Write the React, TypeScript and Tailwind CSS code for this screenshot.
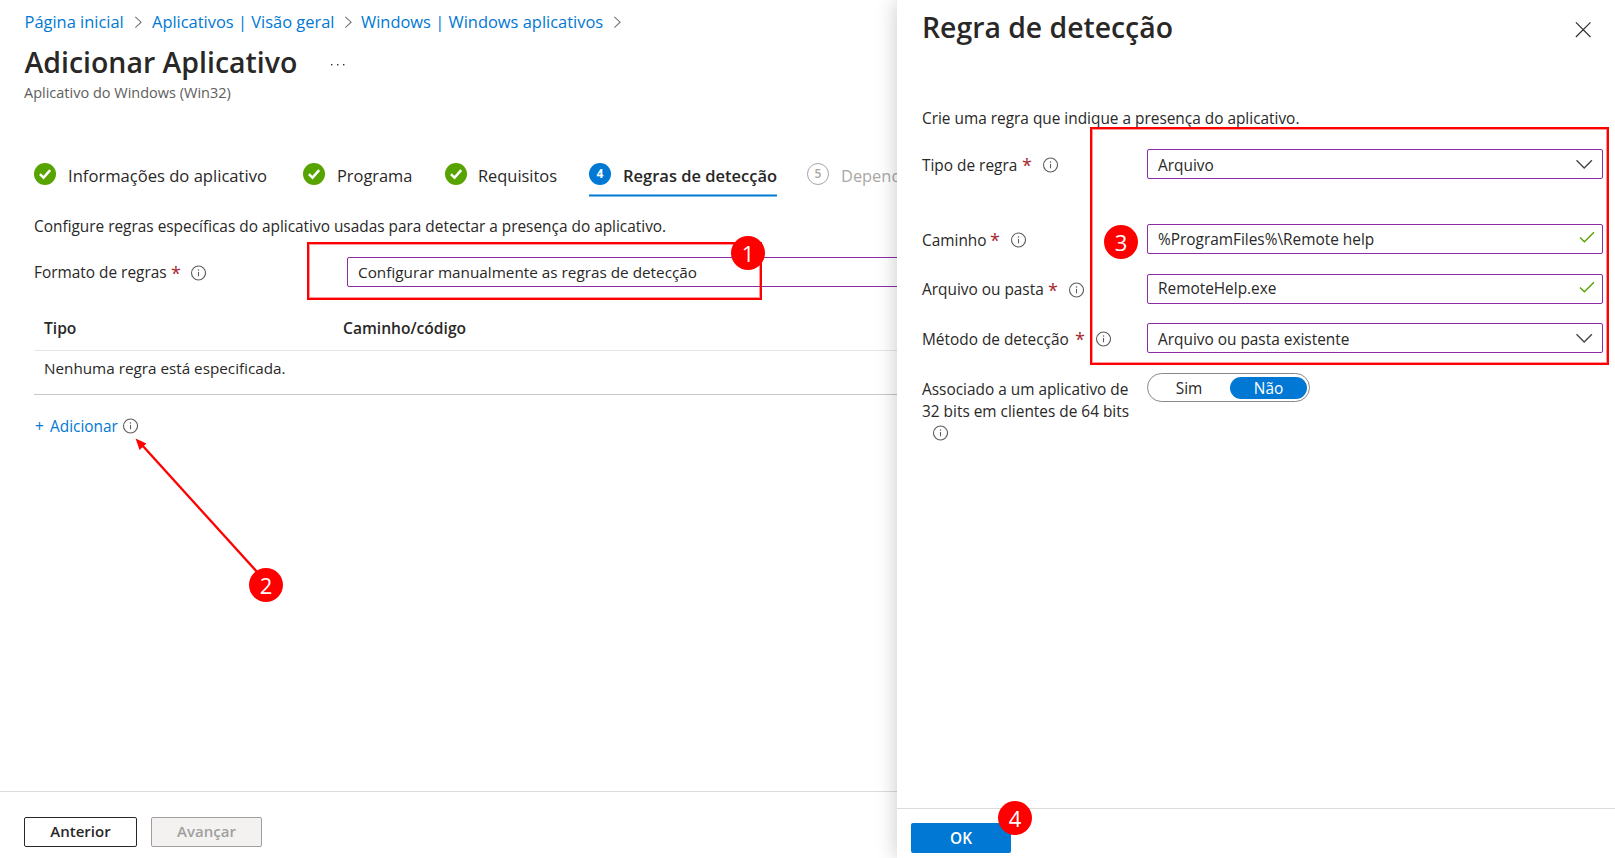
import React from 'react';

function InfoIcon({ className = '' }: { className?: string }) {
  return (
    <svg className={`size-4 shrink-0 ${className}`} viewBox="0 0 16 16" fill="none" aria-hidden="true">
      <circle cx="8.5" cy="8" r="7" stroke="#605e5c" strokeWidth="1.1" />
      <path d="M8.5 6.9v4.4" stroke="#605e5c" strokeWidth="1.1" />
      <circle cx="8.5" cy="4.9" r="0.75" fill="#605e5c" />
    </svg>
  );
}

function CrumbChevron({ className = '' }: { className?: string }) {
  return (
    <svg className={`h-3 w-2 shrink-0 ${className}`} viewBox="0 0 8 12" fill="none" aria-hidden="true">
      <path d="M0.3 0.8 6.1 6.2 0.3 11.6" stroke="#76746f" strokeWidth="1.1" />
    </svg>
  );
}

function ChevronDown() {
  return (
    <svg className="h-[10px] w-[17px] shrink-0" viewBox="0 0 17 10" fill="none" aria-hidden="true">
      <path d="M0.5 1.2 8.2 8.9 15.9 1.2" stroke="#484644" strokeWidth="1.4" />
    </svg>
  );
}

function ValidMark() {
  return (
    <svg className="h-3 w-4 shrink-0" viewBox="0 0 16 12" fill="none" aria-hidden="true">
      <path d="M1 6.4 5.4 10.8 15 1.2" stroke="#57a300" strokeWidth="1.4" />
    </svg>
  );
}

function DoneCircle() {
  return (
    <svg className="size-[22px] shrink-0" viewBox="0 0 22 22" fill="none" aria-hidden="true">
      <circle cx="11" cy="11" r="11" fill="#57a300" />
      <path d="M5.9 11.2 9.5 14.6 16.2 7.2" stroke="#fff" strokeWidth="2.5" />
    </svg>
  );
}

function Star() {
  return <span className="ml-[5px] w-2 shrink-0 text-[18px] leading-[22px] text-[#a4262c]">*</span>;
}

function Badge({ n, className }: { n: number; className: string }) {
  return (
    <span
      className={`absolute flex size-[34px] items-center justify-center rounded-full bg-[#ff0000] text-[22px] leading-none text-white ${className}`}
    >
      {n}
    </span>
  );
}

function Field({
  label,
  labelWidth,
  value,
  valid,
  labelShift = '',
  textShift = '',
  className = '',
}: {
  label: string;
  labelWidth: string;
  value: string;
  valid?: boolean;
  labelShift?: string;
  textShift?: string;
  className?: string;
}) {
  return (
    <div className={`flex h-[30px] ${className}`}>
      <div className="flex w-[225px] shrink-0 items-center pt-[2px]">
        <span className={`whitespace-nowrap ${labelWidth} ${labelShift}`}>{label}</span>
        <Star />
        <InfoIcon className="ml-3" />
      </div>
      <div className="flex w-[456px] items-center justify-between rounded-[2px] border border-[#8a2da5] bg-white pl-[10px]">
        <span className={textShift}>{value}</span>
        {valid ? (
          <span className="mr-[7px] pb-1">
            <ValidMark />
          </span>
        ) : (
          <span className="mr-[9px]">
            <ChevronDown />
          </span>
        )}
      </div>
    </div>
  );
}

export default function App() {
  return (
    <div className="relative flex h-[858px] w-[1615px] overflow-hidden bg-white font-['Open_Sans','Noto_Sans',sans-serif] text-[15.4px] leading-[22px] text-[#292827]">
      <main className="flex w-[897px] shrink-0 flex-col overflow-hidden whitespace-nowrap">
        <nav className="flex h-[43px] shrink-0 items-center pl-[24.5px] text-[16.45px] text-[#0078d4]">
          <a className="w-[110.5px]">Página inicial</a>
          <CrumbChevron />
          <a className="ml-[9px] w-[193px]">Aplicativos | Visão geral</a>
          <CrumbChevron />
          <a className="ml-2 w-[253px]">Windows | Windows aplicativos</a>
          <CrumbChevron />
        </nav>
        <div className="flex h-[38px] shrink-0 items-center pl-[24.5px]">
          <h1 className="w-[305.5px] text-[28.45px] font-semibold">Adicionar Aplicativo</h1>
          <svg className="mt-[5px] h-1 w-4" viewBox="0 0 16 4" fill="#323130" aria-hidden="true">
            <rect x="1" y="1" width="1.4" height="1.4" />
            <rect x="7" y="1" width="1.4" height="1.4" />
            <rect x="13" y="1" width="1.4" height="1.4" />
          </svg>
        </div>
        <p className="h-[23px] shrink-0 pt-px pl-[24px] text-[14.5px] text-[#605e5c]">Aplicativo do Windows (Win32)</p>

        <div className="mt-[53px] flex h-10 shrink-0 pl-[34px] text-[16.4px]">
          <div className="flex h-[34px] w-[269px] shrink-0 items-center gap-3">
            <DoneCircle />
            <span className="pt-[3px] text-[16.6px]">Informações do aplicativo</span>
          </div>
          <div className="flex h-[34px] w-[142px] shrink-0 items-center gap-3">
            <DoneCircle />
            <span className="pt-[3px]">Programa</span>
          </div>
          <div className="flex h-[34px] w-[144px] shrink-0 items-center gap-[11px]">
            <DoneCircle />
            <span className="pt-[3px]">Requisitos</span>
          </div>
          <div className="mr-[30px] flex w-[188px] shrink-0 flex-col justify-between">
            <div className="flex h-[34px] items-center gap-3 font-semibold">
              <span className="flex size-[22px] shrink-0 items-center justify-center rounded-full bg-[#0078d4] text-[12px] leading-none font-bold text-white">
                4
              </span>
              <span className="pt-[3px] text-[16.5px]">Regras de detecção</span>
            </div>
            <span className="h-[3px] border-y border-[#80bce9] bg-[#0078d4]" />
          </div>
          <div className="flex h-[34px] shrink-0 items-center gap-3 text-[#a9a7a5]">
            <span className="flex size-[22px] shrink-0 items-center justify-center rounded-full border border-[#a9a7a5] text-[12px] leading-none font-semibold">
              5
            </span>
            <span className="pt-[3px]">Dependências</span>
          </div>
        </div>

        <p className="mt-[18px] h-[22px] shrink-0 pt-px pl-[34px]">
          Configure regras específicas do aplicativo usadas para detectar a presença do aplicativo.
        </p>

        <div className="mt-5 flex h-[30px] shrink-0 pl-[34px]">
          <div className="flex w-[313px] shrink-0 items-center pt-px">
            <span className="w-[132px]">Formato de regras</span>
            <Star />
            <InfoIcon className="ml-[11px]" />
          </div>
          <div className="flex w-[600px] shrink-0 items-center rounded-[2px] border border-[#8a2da5] pl-[10px] text-[15.3px]">
            Configurar manualmente as regras de detecção
          </div>
        </div>

        <div className="ml-[34px] shrink-0">
          <div className="mt-[19px] flex h-[45px] items-center border-b border-[#e8e7e6] pl-[10px] text-[15.6px] font-semibold">
            <span className="w-[299px]">Tipo</span>
            <span>Caminho/código</span>
          </div>
          <div className="h-11 border-b border-[#c8c6c4] pt-[6px] pl-[10px] text-[15.25px]">
            Nenhuma regra está especificada.
          </div>
        </div>

        <div className="mt-5 flex h-[22px] shrink-0 items-center pl-[35px] text-[#0078d4]">
          <span className="w-[15px] pt-[2px]">+</span>
          <a className="w-[72px] pt-[2px]">Adicionar</a>
          <InfoIcon />
        </div>

        <footer className="mt-auto flex h-[67px] shrink-0 gap-[14px] border-t border-[#dcdbda] pt-[25px] pl-6 text-[15px] font-semibold">
          <button className="h-[30px] w-[113px] rounded-[2px] border border-[#292827] pb-[3px]">Anterior</button>
          <button className="h-[30px] w-[111px] rounded-[2px] border border-[#a19f9d] bg-[#f3f2f1] pb-[3px] text-[#a19f9d]">
            Avançar
          </button>
        </footer>
      </main>

      <aside className="flex w-[718px] shrink-0 flex-col bg-white shadow-[0_0_20px_rgba(0,0,0,0.22)]">
        <header className="flex h-[54px] shrink-0 items-center justify-between pl-[25px]">
          <h2 className="text-[28.35px] font-semibold">Regra de detecção</h2>
          <svg className="mt-[5px] mr-6 size-4" viewBox="0 0 16 16" fill="none" aria-hidden="true">
            <path d="M0.9 0.4 15.5 15M15.5 0.4 0.9 15" stroke="#323130" strokeWidth="1.2" />
          </svg>
        </header>
        <div className="flex flex-1 flex-col pt-[54px] pl-[25px]">
          <p className="h-[22px]">Crie uma regra que indique a presença do aplicativo.</p>
          <Field
            label="Tipo de regra"
            labelWidth="w-[95px]"
            value="Arquivo"
            labelShift="pt-[2px]"
            textShift="pt-[4px]"
            className="mt-[19px]"
          />
          <Field
            label="Caminho"
            labelWidth="w-[63px]"
            value="%ProgramFiles%\Remote help"
            valid
            labelShift="pt-[2px]"
            textShift="pt-[2px]"
            className="mt-[45px]"
          />
          <Field
            label="Arquivo ou pasta"
            labelWidth="w-[121px]"
            value="RemoteHelp.exe"
            valid
            textShift="pb-px"
            className="mt-5"
          />
          <Field
            label="Método de detecção"
            labelWidth="w-[148px]"
            value="Arquivo ou pasta existente"
            labelShift="pt-[2px]"
            textShift="pt-[4px]"
            className="mt-[19px]"
          />
          <div className="mt-5 flex">
            <div className="w-[225px] shrink-0 pt-[6px]">
              <p className="whitespace-nowrap">Associado a um aplicativo de</p>
              <p className="whitespace-nowrap">32 bits em clientes de 64 bits</p>
              <InfoIcon className="mt-[2px] ml-[10px]" />
            </div>
            <div className="flex h-[29px] w-[163px] items-center rounded-full border border-[#8a8886] pr-[2px]">
              <span className="w-[82px] pt-[2px] text-center">Sim</span>
              <span className="h-[22px] flex-1 rounded-full bg-[#0078d4] pt-px text-center text-white">Não</span>
            </div>
          </div>
        </div>
        <footer className="h-[50px] shrink-0 border-t border-[#dcdbda] pt-[14px] pl-[14px]">
          <button className="h-[30px] w-[100px] rounded-[2px] bg-[#0078d4] pt-px font-semibold text-white">OK</button>
        </footer>
      </aside>

      <div className="pointer-events-none absolute inset-0">
        <div className="absolute top-[242px] left-[307px] h-[58px] w-[455px] border-2 border-[#ff0000] shadow-[inset_0_0_0_1px_rgba(255,0,0,0.4)]" />
        <div className="absolute top-[127px] left-[1090px] h-[238px] w-[519px] border-2 border-[#ff0000] shadow-[inset_0_0_0_1px_rgba(255,0,0,0.4)]" />
        <svg className="absolute top-[430px] left-[130px] h-40 w-[140px]" viewBox="0 0 140 160" aria-hidden="true">
          <path d="M12 15 128 143" stroke="#ff0000" strokeWidth="2.3" />
          <path d="M5.6 8.4 16.4 13.4 9.6 20Z" fill="#ff0000" />
        </svg>
        <Badge n={1} className="top-[236px] left-[731px]" />
        <Badge n={2} className="top-[568px] left-[249px]" />
        <Badge n={3} className="top-[225px] left-[1104px]" />
        <Badge n={4} className="top-[801px] left-[998px]" />
      </div>
    </div>
  );
}
